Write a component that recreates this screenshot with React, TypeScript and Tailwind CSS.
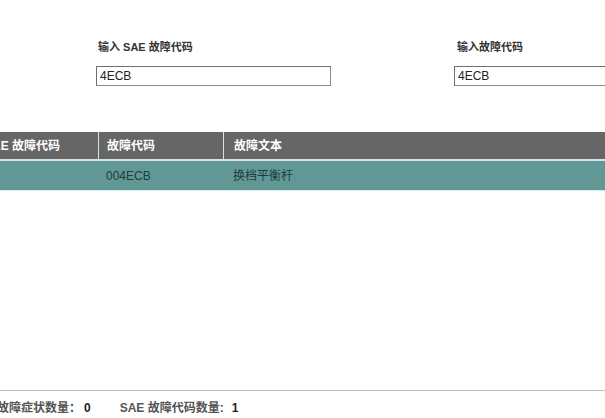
export default function App() {
  const font = { fontFamily: '"Liberation Sans", "Noto Sans CJK SC", sans-serif' };
  return (
    <div className="w-[605px] h-[418px] bg-white overflow-hidden relative" style={font}>
      {/* inputs */}
      <div className="flex pt-[40px]">
        <div className="ml-[96px] w-[235px] shrink-0 flex flex-col">
          <label className="text-[11px] font-bold text-[#333] pl-[2px] leading-[14px]">输入 SAE 故障代码</label>
          <input
            readOnly
            value="4ECB"
            className="mt-[12px] w-[235px] h-[20px] border border-[#8a8a8a] border-t-[#6f6f6f] border-l-[#6f6f6f] px-[3px] text-[12px] text-[#222] outline-none"
          />
        </div>
        <div className="ml-[123px] w-[200px] shrink-0 flex flex-col">
          <label className="text-[11px] font-bold text-[#333] pl-[3px] leading-[14px]">输入故障代码</label>
          <input
            readOnly
            value="4ECB"
            className="mt-[12px] h-[20px] w-[200px] border border-[#8a8a8a] border-t-[#6f6f6f] border-l-[#6f6f6f] px-[3px] text-[12px] text-[#222] outline-none"
          />
        </div>
      </div>

      {/* table */}
      <div className="mt-[46px] ml-[-24px] w-[650px] text-[12px]">
        <div className="flex h-[29px] bg-[#666666] text-white font-bold border-b-2 border-[#d8e4e4]">
          <div className="w-[123px] pl-[8px] flex items-center border-r border-[#e0e0e0]">SAE 故障代码</div>
          <div className="w-[125px] pl-[8px] flex items-center border-r border-[#e0e0e0]">故障代码</div>
          <div className="flex-1 pl-[10px] flex items-center">故障文本</div>
        </div>
        <div className="flex h-[30px] bg-[#619896] text-[#1f3d3c] border-b border-[#d8ecec]">
          <div className="w-[123px]" />
          <div className="w-[125px] pl-[7px] flex items-center">004ECB</div>
          <div className="flex-1 pl-[9px] flex items-center">换档平衡杆</div>
        </div>
      </div>

      {/* footer */}
      <div className="absolute left-0 right-0 top-[390px] border-t border-[#bdbdbd]">
        <div className="flex items-center h-[28px] pt-[5px] text-[12px] font-bold text-[#555] ml-[-3px]">
          <span>故障症状数量：</span>
          <span className="ml-[3px] text-[#222]">0</span>
          <span className="ml-[29px]">SAE 故障代码数量:</span>
          <span className="ml-[8px] text-[#222]">1</span>
        </div>
      </div>
    </div>
  );
}
